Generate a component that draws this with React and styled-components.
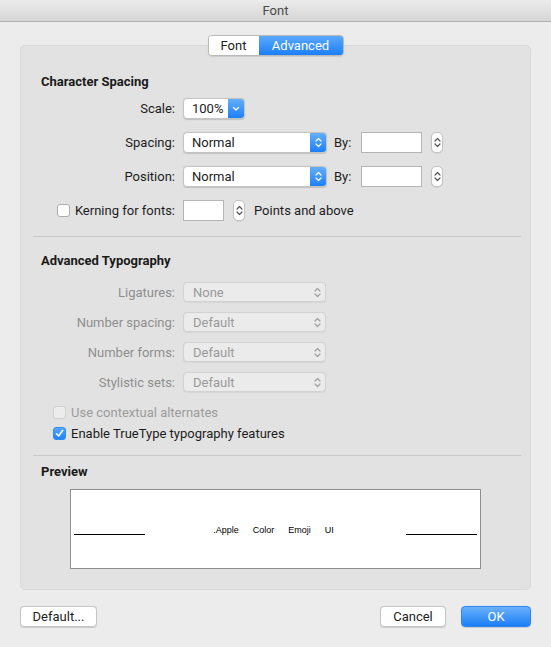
import styled, { createGlobalStyle } from "styled-components";

const GlobalStyle = createGlobalStyle`
  html, body {
    margin: 0;
    padding: 0;
    background: #ececec;
  }
  body {
    font-family: Roboto, "Liberation Sans", sans-serif;
    font-size: 13px;
    color: #1d1d1d;
  }
`;

const Window = styled.div`
  width: 551px;
  height: 647px;
  background: #ececec;
  display: flex;
  flex-direction: column;
  overflow: hidden;
`;

const TitleBar = styled.div`
  height: 21px;
  flex-shrink: 0;
  display: flex;
  align-items: center;
  justify-content: center;
  background: linear-gradient(#ebebeb, #d6d6d6);
  border-bottom: 1px solid #b3b3b3;
  color: #4a4a4a;
  font-size: 13px;
`;

const Body = styled.div`
  padding: 13px 20px 0 20px;
  display: flex;
  flex-direction: column;
`;

const Tabs = styled.div`
  align-self: center;
  display: flex;
  height: 19px;
  border: 1px solid #b9b9b9;
  border-radius: 4px;
  overflow: hidden;
  position: relative;
  z-index: 1;
  box-shadow: 0 0.5px 1px rgba(0, 0, 0, 0.1);
`;

const Tab = styled.div`
  display: flex;
  align-items: center;
  justify-content: center;
  width: ${(p) => p.w}px;
  font-size: 13px;
  color: ${(p) => (p.active ? "#fff" : "#1d1d1d")};
  background: ${(p) => (p.active ? "linear-gradient(#5ca9fb, #1b7ff8)" : "#fff")};
`;

const Group = styled.div`
  margin-top: -11px;
  height: 545px;
  background: #e2e2e2;
  border: 1px solid #d8d8d8;
  border-radius: 5px;
  padding: 28px 11px 0 11px;
  box-sizing: border-box;
`;

const Heading = styled.div`
  font-weight: 700;
  font-size: 13px;
  color: #1a1a1a;
  padding-left: 9px;
  line-height: 16px;
`;

const FormGrid = styled.div`
  display: grid;
  grid-template-columns: 143px auto;
  column-gap: 8px;
  row-gap: ${(p) => p.gap}px;
  margin-top: ${(p) => p.top}px;
  align-items: center;
  justify-items: start;
`;

const Label = styled.div`
  justify-self: end;
  color: ${(p) => (p.disabled ? "#8f8f8f" : "#1d1d1d")};
  display: flex;
  align-items: center;
  gap: 5px;
`;

const Controls = styled.div`
  display: flex;
  align-items: center;
`;

const Popup = styled.div`
  width: ${(p) => p.w}px;
  height: ${(p) => (p.disabled ? 20 : 21)}px;
  box-sizing: border-box;
  display: flex;
  align-items: center;
  background: ${(p) => (p.disabled ? "#ebebeb" : "#fff")};
  border: 1px solid ${(p) => (p.disabled ? "#d2d2d2" : "#c4c4c4")};
  border-radius: 4px;
  box-shadow: 0 0.5px 1px rgba(0, 0, 0, ${(p) => (p.disabled ? 0.05 : 0.15)});
  overflow: hidden;
  color: ${(p) => (p.disabled ? "#9a9a9a" : "#1d1d1d")};
`;

const PopupText = styled.span`
  flex: 1;
  padding-left: ${(p) => p.pad}px;
`;

const PopupArrow = styled.div`
  width: ${(p) => p.w}px;
  align-self: stretch;
  display: flex;
  align-items: center;
  justify-content: center;
  background: ${(p) => (p.blue ? "linear-gradient(#64aefc, #1d80f8)" : "transparent")};
`;

const ByLabel = styled.span`
  margin: 0 10px 0 7px;
`;

const TextField = styled.div`
  width: ${(p) => p.w}px;
  height: 21px;
  box-sizing: border-box;
  background: #fff;
  border: 1px solid #b5b5b5;
`;

const Stepper = styled.div`
  width: 12px;
  height: 21px;
  margin-left: 9px;
  box-sizing: border-box;
  background: #fff;
  border: 1px solid #c4c4c4;
  border-radius: 5px;
  display: flex;
  align-items: center;
  justify-content: center;
  box-shadow: 0 0.5px 1px rgba(0, 0, 0, 0.12);
`;

const Checkbox = styled.div`
  width: 13px;
  height: 13px;
  box-sizing: border-box;
  border-radius: 3px;
  border: 1px solid ${(p) => (p.checked ? "#2f8bf5" : p.disabled ? "#d0d0d0" : "#adadad")};
  background: ${(p) => (p.checked ? "linear-gradient(#5aa8fb, #1f82f8)" : p.disabled ? "#ececec" : "#fff")};
  display: flex;
  align-items: center;
  justify-content: center;
  flex-shrink: 0;
`;

const CheckRow = styled.div`
  display: flex;
  align-items: center;
  gap: 5px;
  padding-left: 21px;
  color: ${(p) => (p.disabled ? "#9c9c9c" : "#1d1d1d")};
  margin-top: ${(p) => p.top}px;
  height: 13px;
`;

const Points = styled.span`
  margin-left: 9px;
`;

const Separator = styled.div`
  height: 1px;
  background: #c9c9c9;
  margin: ${(p) => p.top}px 0 0 1px;
  width: 488px;
`;

const HeadingWrap = styled.div`
  margin-top: ${(p) => p.top}px;
`;

const PreviewBox = styled.div`
  margin: 9px 0 0 38px;
  width: 411px;
  height: 80px;
  box-sizing: border-box;
  background: #fff;
  border: 1px solid #8f8f8f;
  display: flex;
  align-items: center;
  justify-content: space-between;
  padding: 10px 3px 0 3px;
`;

const PreviewLine = styled.div`
  width: 71px;
  height: 1px;
  background: #000;
`;

const PreviewText = styled.div`
  display: flex;
  gap: 14px;
  font-family: "Liberation Sans", Arial, sans-serif;
  font-size: 9px;
  color: #000;
  margin-top: -8px;
  margin-left: -4px;
`;

const Footer = styled.div`
  display: flex;
  align-items: center;
  padding: 16px 20px 0 20px;
  gap: 15px;
`;

const Button = styled.div`
  height: 19px;
  width: ${(p) => p.w}px;
  display: flex;
  align-items: center;
  justify-content: center;
  border-radius: 4px;
  font-size: 13px;
  border: 1px solid ${(p) => (p.primary ? "#2d86f4" : "#c6c6c6")};
  background: ${(p) => (p.primary ? "linear-gradient(#6ab1fc, #1b7ef7)" : "#fff")};
  color: ${(p) => (p.primary ? "#fff" : "#1d1d1d")};
  box-shadow: 0 0.5px 1px rgba(0, 0, 0, 0.15);
`;

const Spacer = styled.div`
  flex: 1;
`;

function Chevrons({ color = "#fff" }) {
  return (
    <svg width="7" height="13" viewBox="0 0 7 13">
      <path d="M1 5 L3.5 2.5 L6 5" fill="none" stroke={color} strokeWidth="1.2" strokeLinecap="round" strokeLinejoin="round" />
      <path d="M1 8 L3.5 10.5 L6 8" fill="none" stroke={color} strokeWidth="1.2" strokeLinecap="round" strokeLinejoin="round" />
    </svg>
  );
}

function DownChevron() {
  return (
    <svg width="8" height="6" viewBox="0 0 8 6">
      <path d="M1.5 1.5 L4 4 L6.5 1.5" fill="none" stroke="#fff" strokeWidth="1.3" strokeLinecap="round" strokeLinejoin="round" />
    </svg>
  );
}

function Check() {
  return (
    <svg width="9" height="9" viewBox="0 0 9 9">
      <path d="M1.5 4.8 L3.6 7 L7.6 1.5" fill="none" stroke="#fff" strokeWidth="1.5" strokeLinecap="round" strokeLinejoin="round" />
    </svg>
  );
}

function SpacingRow({ label }) {
  return (
    <>
      <Label>{label}</Label>
      <Controls>
        <Popup w={144}>
          <PopupText pad={8}>Normal</PopupText>
          <PopupArrow w={16} blue>
            <Chevrons />
          </PopupArrow>
        </Popup>
        <ByLabel>By:</ByLabel>
        <TextField w={61} />
        <Stepper>
          <Chevrons color="#555" />
        </Stepper>
      </Controls>
    </>
  );
}

const typographyRows = [
  ["Ligatures:", "None"],
  ["Number spacing:", "Default"],
  ["Number forms:", "Default"],
  ["Stylistic sets:", "Default"],
];

export default function App() {
  return (
    <Window>
      <GlobalStyle />
      <TitleBar>Font</TitleBar>
      <Body>
        <Tabs>
          <Tab w={50}>Font</Tab>
          <Tab w={84} active>Advanced</Tab>
        </Tabs>
        <Group>
          <Heading>Character Spacing</Heading>
          <FormGrid gap={13} top={8}>
            <Label>Scale:</Label>
            <Popup w={62}>
              <PopupText pad={8}>100%</PopupText>
              <PopupArrow w={16} blue>
                <DownChevron />
              </PopupArrow>
            </Popup>

            <SpacingRow label="Spacing:" />
            <SpacingRow label="Position:" />

            <Label>
              <Checkbox />
              Kerning for fonts:
            </Label>
            <Controls>
              <TextField w={41} />
              <Stepper>
                <Chevrons color="#555" />
              </Stepper>
              <Points>Points and above</Points>
            </Controls>
          </FormGrid>

          <Separator top={15} />

          <HeadingWrap top={16}>
            <Heading>Advanced Typography</Heading>
          </HeadingWrap>
          <FormGrid gap={10} top={13}>
            {typographyRows.map(([label, value]) => [
              <Label key={label} disabled>{label}</Label>,
              <Popup key={label + "-popup"} w={143} disabled>
                <PopupText pad={9}>{value}</PopupText>
                <PopupArrow w={16}>
                  <Chevrons color="#a0a0a0" />
                </PopupArrow>
              </Popup>,
            ])}
          </FormGrid>

          <CheckRow disabled top={14}>
            <Checkbox disabled />
            Use contextual alternates
          </CheckRow>
          <CheckRow top={8}>
            <Checkbox checked>
              <Check />
            </Checkbox>
            Enable TrueType typography features
          </CheckRow>

          <Separator top={15} />

          <HeadingWrap top={8}>
            <Heading>Preview</Heading>
          </HeadingWrap>
          <PreviewBox>
            <PreviewLine />
            <PreviewText>
              <span>.Apple</span>
              <span>Color</span>
              <span>Emoji</span>
              <span>UI</span>
            </PreviewText>
            <PreviewLine />
          </PreviewBox>
        </Group>
      </Body>
      <Footer>
        <Button w={75}>Default...</Button>
        <Spacer />
        <Button w={64}>Cancel</Button>
        <Button w={68} primary>OK</Button>
      </Footer>
    </Window>
  );
}
